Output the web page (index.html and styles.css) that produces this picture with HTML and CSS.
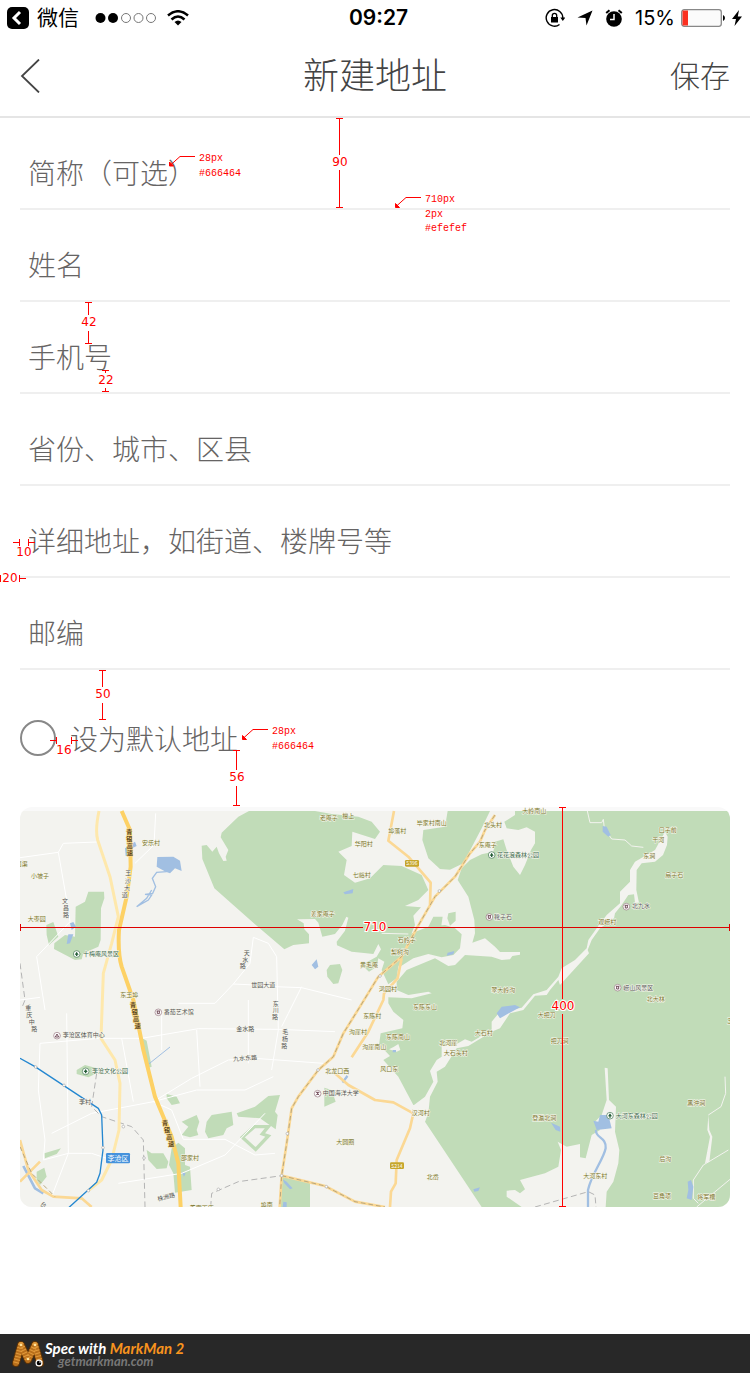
FILE: index.html
```html
<!DOCTYPE html>
<html lang="zh-CN">
<head>
<meta charset="utf-8">
<meta name="viewport" content="width=device-width, initial-scale=1">
<title>新建地址</title>
<link rel="stylesheet" href="styles.css">
</head>
<body>
<div class="page">
  <div class="status">
    <div class="status-left">
      <svg class="app-back" viewBox="0 0 22 22" width="22" height="22" aria-hidden="true"><rect width="22" height="22" rx="5"/><path d="M13 5 7 11l6 6" fill="none" stroke="#fff" stroke-width="3"/></svg>
      <span class="app-name">微信</span>
      <svg class="signal" viewBox="0 0 62 12" width="62" height="12" aria-hidden="true"><circle cx="5.500" cy="6" r="5"/><circle cx="18" cy="6" r="5"/><g fill="none" stroke="#777" stroke-width="1"><circle cx="31" cy="6" r="4.500"/><circle cx="43.500" cy="6" r="4.500"/><circle cx="56" cy="6" r="4.500"/></g></svg>
      <svg class="wifi" viewBox="0 0 22 16" width="22" height="16" aria-hidden="true"><g fill="none" stroke="#000" stroke-width="2.500"><path d="M1 5.500Q11-3 21 5.500"/><path d="M4.500 9.500Q11 3.500 17.500 9.500"/></g><path d="M7.500 12Q11 9 14.500 12L11 15.500Z"/></svg>
    </div>
    <div class="time">09:27</div>
    <div class="status-right">
      <svg viewBox="0 0 20 20" width="20" height="20" aria-hidden="true"><path d="M14.500 16.500A8.300 8.300 0 1 1 17.800 10" fill="none" stroke="#000" stroke-width="1.400"/><path d="M15.300 9.500h5l-2.500 3.500ZM6 9h7v5.500H6Z"/><path d="M7.300 9V7.500a2.200 2.200 0 0 1 4.400 0V9" fill="none" stroke="#000" stroke-width="1.300"/></svg>
      <svg viewBox="0 0 16 16" width="16" height="16" aria-hidden="true"><path d="M15.500 .5 9.500 15.500 8.500 8 .5 7.500Z"/></svg>
      <svg viewBox="0 0 18 18" width="18" height="18" aria-hidden="true"><circle cx="9" cy="10" r="7.800"/><path d="M1.200 4 4.500 1.200M16.800 4 13.500 1.200" stroke="#000" stroke-width="2"/><path d="M9 5v5.500H5" fill="none" stroke="#fff" stroke-width="1.500"/></svg>
      <span class="percent">15%</span>
      <svg class="battery" viewBox="0 0 45 18" width="45" height="18" aria-hidden="true"><rect x=".7" y=".7" width="39.600" height="16.600" rx="2.500" fill="#fbfbfb" stroke="#888" stroke-width="1.300"/><path d="M1.500 1.500h5.500v15h-5.500Z" fill="#fb3020"/><path d="M42 6q2 1 2 3t-2 3Z"/></svg>
      <svg class="bolt" viewBox="0 0 10 16" width="10" height="16" aria-hidden="true"><path d="M7 0 0 9h4L2.500 16 10 6.500H5.800Z"/></svg>
    </div>
  </div>

  <header class="nav">
    <button class="back" type="button" aria-label="返回"><svg viewBox="0 0 20 34" width="20" height="34" aria-hidden="true"><path d="M19 .5 2 17l17 16.500" fill="none" stroke="#444" stroke-width="1.800"/></svg></button>
    <h1 class="title">新建地址</h1>
    <button class="save" type="submit" form="address">保存</button>
  </header>

  <form class="form" id="address">
    <input class="field" type="text" aria-label="简称（可选）" placeholder="简称（可选）">
    <input class="field" type="text" aria-label="姓名" placeholder="姓名">
    <input class="field" type="tel" aria-label="手机号" placeholder="手机号">
    <input class="field" type="text" aria-label="省份、城市、区县" placeholder="省份、城市、区县">
    <input class="field" type="text" aria-label="详细地址，如街道、楼牌号等" placeholder="详细地址，如街道、楼牌号等">
    <input class="field" type="text" aria-label="邮编" placeholder="邮编">
    <label class="default"><input class="tick" type="checkbox"><span>设为默认地址</span></label>
  </form>

  <div class="map">
    <svg class="map-art" viewBox="15 21 2130 1200" role="img" aria-label="地图">
      <rect x="15" y="21" width="2130" height="1200" fill="#f9f9f9"/>
      <rect x="15" y="33" width="2130" height="1188" fill="#f3f3ef"/>
      <!-- woodland -->
      <g fill="#c1dcb8">
        <path d="M702 33 670 50 620 98 617 112 640 150 632 170 635 182 625 183 612 160 605 140 592 155 575 135 560 137 562 177 598 265 720 373 808 448 835 435 882 430 882 403 868 388 866 370 846 358 900 357 910 368 922 410 960 402 982 375 994 350 1000 353 990 392 965 425 966 436 1010 455 1040 458 1075 462 1090 432 1098 448 1085 470 1040 495 1062 515 1085 500 1090 475 1108 485 1100 510 1120 553 1145 535 1150 500 1200 375 1195 347 1218 322 1170 318 1210 300 1240 270 1220 225 1160 198 1105 195 1065 235 1020 248 987 225 995 180 970 155 1010 138 1012 95 1080 117 1095 95 1070 65 1030 50 950 42 900 33Z"/>
        <path d="M1298 33 1290 80 1225 90 1222 120 1240 175 1275 207 1305 209 1345 190 1400 85 1425 33Z"/>
        <path d="M1300 340 1322 335 1322 362 1305 377 1297 355ZM1275 350 1283 350 1278 383 1240 380 1255 350ZM1190 400 1240 380 1290 375 1320 385 1340 403 1335 445 1315 465 1280 472 1240 462 1195 475 1155 500 1145 490 1160 430Z"/>
        <path d="M1328 240 1340 205 1365 180 1400 163 1435 155 1440 125 1465 118 1475 150 1495 200 1515 225 1530 195 1548 150 1560 130 1560 95 1535 82 1510 90 1475 85 1468 65 1500 45 1500 33H2145V1221H1400L1230 965 1236 915 1195 915 1150 830 1105 780 1125 768 1108 750 1115 740 1092 735 1097 700 1162 685 1165 660 1135 635 1120 610 1120 592 1190 595 1250 580 1240 575 1180 585 1145 570 1145 545 1175 510 1260 475 1300 498 1320 495 1350 465 1430 470 1460 480 1485 478 1492 468 1515 464 1515 456 1455 456 1440 440 1410 415 1372 428 1380 400 1378 360 1360 290Z"/>
        <path d="M267 275 220 275 210 305 182 320 180 410 150 405 118 430 117 447 180 480 200 478 205 460 250 440 257 420 258 325 268 295ZM94 375 115 366 125 395 130 410 102 435 95 405ZM935 510 945 495 975 492 982 510 970 550 955 552 937 530Z"/>
        <path d="M382 715 395 722 410 800 398 805ZM185 810 210 795 245 805 245 820 220 832 185 822ZM455 882 485 890 495 910 470 915 455 895ZM88 1060 138 1045 125 1062 90 1075ZM65 1115 88 1103 95 1130 75 1155 65 1140ZM500 965 545 945 553 965 545 990 550 1005 525 1012 500 1005 520 980ZM575 965 590 945 650 935 655 975 635 985 625 1005 580 1015 570 995ZM665 940 720 920 760 888 795 885 780 935 788 945 782 988 735 955 670 950ZM395 1050 410 1060 445 1060 460 1085 455 1105 425 1107 400 1080ZM470 1045 490 1028 510 1045 510 1095 525 1100 530 1170 480 1178 475 1120 462 1095ZM928 863 950 870 962 905 928 920ZM800 1130 885 1148V1221H797Z"/>
        <path d="M682 1012 718 980 760 980 742 1002 760 1008 722 1048Z" fill="none" stroke="#c1dcb8" stroke-width="10"/>
      </g>
      <!-- valleys -->
      <g fill="#f3f3ef">
        <path d="M1950 95 1958 110 1956 135 1944 165 1920 185 1880 190 1865 210 1864 270 1872 308 1860 308 1857 283 1840 285 1820 315 1800 340 1797 355 1755 385 1730 420 1718 450 1722 460 1685 500 1635 555 1630 540 1605 570 1595 585 1560 587 1525 630 1485 640 1455 685 1430 695 1360 738 1325 745 1290 800 1265 815 1268 845 1245 890 1240 940 1230 965 1195 940 1193 918 1230 890 1255 845 1245 813 1265 780 1280 770 1280 735 1320 735 1350 718 1370 725 1430 690 1430 665 1455 635 1520 623 1555 583 1595 570 1630 530 1640 505 1680 480 1715 445 1720 420 1745 385 1775 345 1815 310 1815 275 1845 245 1845 210 1860 185 1920 150Z"/>
        <path d="M1769 803 1778 805 1782 900 1803 920 1800 995 1813 1050 1810 1090 1795 1145 1775 1175 1772 1221H1520L1475 1190 1475 1172 1500 1170 1515 1180 1530 1168 1515 1140 1590 1120 1630 1100 1638 1050 1628 1025 1655 1040 1695 1032 1695 1072 1712 1075 1730 1005 1755 990 1740 965 1760 945 1775 900ZM1137 740 1150 732 1156 750 1145 755 1122 748Z"/>
        <path d="M2080 945 2083 990 2092 1010 2083 1085 2070 1090 2085 1010 2077 990Z"/>
      </g>
      <g fill="none" stroke="#f3f3ef" stroke-width="4">
        <path d="M1717 33 1725 68 1760 68 1765 58 1768 85 1790 117 1830 120 1850 138 1885 142M2140 1050 2065 1095 2035 1140 2035 1195 2050 1210M2145 1138 2045 1221M2080 945 2118 920 2132 880 2130 830M1100 400 1180 402" stroke-width="3"/>
      </g>
      <!-- water -->
      <g fill="#a1bfe2">
        <path d="M427 171 475 170 495 182 500 213 480 205 465 220 452 215 425 200ZM330 145 345 135 360 125 365 138 340 150 342 168 332 168ZM165 370 175 366 183 380 170 390ZM160 403 175 403 165 430 155 432ZM985 277 1015 267 1013 280 990 283ZM890 495 905 478 910 500 900 508ZM1298 458 1318 453 1315 463 1295 467ZM1445 640 1460 620 1500 615 1515 622 1490 635 1455 655ZM1763 78 1775 80 1787 105 1780 110 1763 95ZM1755 945 1780 945 1790 985 1745 990 1735 962 1750 965ZM1608 968 1635 980 1636 995 1622 990ZM2018 1145 2028 1140 2035 1160 2030 1200 2015 1195 2020 1170ZM980 845 995 825 1000 830 985 850ZM1133 750 1143 750 1143 757 1133 757ZM1375 1168 1395 1162 1390 1173 1378 1175ZM803 1138 815 1145 833 1165 825 1168 808 1150ZM805 1205 815 1207 815 1221 803 1221ZM500 1115 512 1120 507 1130Z"/>
        <path d="M455 215 425 217 412 235 422 260 413 280 390 283 410 285 400 300 365 320 395 295 410 270" stroke="#a1bfe2" stroke-width="4" fill="none"/>
        <path d="M400 793 465 741" stroke="#a1bfe2" stroke-width="3"/>
        <path d="M1743 990C1740 1015 1775 1010 1772 1045C1765 1080 1730 1120 1719 1170V1221" fill="none" stroke="#a1bfe2" stroke-width="7"/>
        <path d="M25 1098 60 1165 85 1180" fill="none" stroke="#a1bfe2" stroke-width="8"/>
      </g>
      <!-- streets -->
      <g fill="none" stroke="#fff" stroke-width="3">
        <path d="M422 40 417 135 360 190M15 173 130 157 145 130 245 126M130 157 155 300 165 365 65 470 90 630M15 600 75 592M75 730 250 715 380 715 550 686 790 688 960 695M75 730 70 870 90 1020 85 1080 160 1060 230 1060 290 1080M155 640 160 1060 110 1190M110 1000 230 940 415 905 530 835 640 780 720 775 925 790M415 905 545 870 690 870 775 830M415 905 470 930 505 1018 630 1018 720 1065 780 1060M440 640V750M490 610 600 610 655 552 720 555 780 560 860 563 1010 600M655 552 705 490 715 412 760 430 785 470 790 690 770 810M800 680 820 640 860 560M545 690 555 860M320 715 355 905M310 1150 500 1120 630 1065 750 940M700 600V790"/>
      </g>
      <!-- railways -->
      <g fill="none" stroke="#b4b4b4" stroke-width="3" stroke-dasharray="18 10">
        <path d="M15 490 30 600 20 625M245 820 230 920 260 950 350 980 385 1020 390 1221M587 1221 590 1180 670 1145 800 1127M1560 1221 1720 1175 1740 1185 1743 1221"/>
      </g>
      <!-- main roads -->
      <g fill="none" stroke-linejoin="round">
        <path d="M252 33Q240 90 248 120L285 230 310 350 290 430 265 520 258 715 300 780 315 850 312 990 290 1080 260 1140 220 1172" stroke="#fee8ac" stroke-width="9"/>
        <path d="M320 33 345 90 347 200 335 290 312 390Q308 460 320 500L355 600 385 750 420 890 470 1010 490 1090 497 1221" stroke="#fdd165" stroke-width="12"/>
        <g stroke="#fbd894" stroke-width="8"><path d="M1137 33 1120 122 1180 170 1247 248 1245 315M1160 475 1148 535 1107 580 1105 600 1060 695 1010 772M958 818 1000 855 1080 900 1135 907 1195 940 1185 985 1145 1080 1142 1150 1128 1175 1125 1221M800 1127 930 1158 1020 1205 1110 1221M15 1020 40 1110 80 1170 115 1190 200 1195 230 1221M15 1145 75 1085M1440 45 1410 90 1395 125 1365 160 1320 230 1260 290 1205 385 1160 470 1090 530 1035 620 985 700 955 770 910 810 850 890 830 925 815 1030 800 1127 794 1221"/></g>
        <path d="M1440 45 1410 90 1395 125 1365 160 1320 230 1260 290 1205 385 1160 470 1090 530 1035 620 985 700 955 770 910 810 850 890 830 925 815 1030 800 1127 794 1221M800 1127 930 1158 1020 1205 1110 1221M15 1040 50 1120 120 1190" stroke="#b9a77e" stroke-width="3" stroke-dasharray="14 9"/>
        <path d="M15 775 60 800 250 925 260 945 264 1050 255 1120 245 1147 160 1224" stroke="#2487d0" stroke-width="4"/>
      </g>
      <g fill="#fff" stroke="#aaa" stroke-width="2"><circle cx="62" cy="801" r="4"/><circle cx="147" cy="856" r="4"/><circle cx="264" cy="1043" r="4"/><circle cx="220" cy="1172" r="4"/><circle cx="325" cy="980" r="4"/><circle cx="387" cy="1074" r="4"/><circle cx="610" cy="1168" r="4"/><circle cx="909" cy="810" r="4"/><circle cx="817" cy="1001" r="4"/><circle cx="800" cy="1127" r="4"/><circle cx="934" cy="1160" r="4"/><circle cx="1095" cy="528" r="4"/><circle cx="1273" cy="273" r="4"/></g>
      <!-- shields -->
      <rect x="1170" y="180" width="42" height="20" rx="4" fill="#c6a62b"/><rect x="1125" y="1087" width="42" height="20" rx="4" fill="#c6a62b"/><rect x="273" y="1059" width="72" height="31" rx="4" fill="#4592dc"/>
      <g class="shield"><text x="1191" y="196">S396</text><text x="1146" y="1103">S214</text><text class="district" x="309" y="1082">李沧区</text></g>
      <g class="village">
        <text x="408" y="136">安乐村</text><text x="20" y="199">南渠</text><text x="75" y="234">小坡子</text><text x="65" y="364">大枣园</text><text x="343" y="590">东王埠</text><text x="525" y="1079">邵家村</text>
        <text x="941" y="61">老庵子</text><text x="1000" y="55">檀上</text><text x="1147" y="100">埠落村</text><text x="1250" y="74">毕家村南山</text><text x="1046" y="138">华阳村</text><text x="1040" y="231">七峪村</text><text x="923" y="348">姜家庵子</text><text x="1175" y="426">石岭子</text><text x="1155" y="461">梨树沟</text><text x="1062" y="500">黄毛庵</text><text x="1119" y="573">鸿园村</text><text x="1230" y="626">东陈东山</text><text x="1434" y="82">北头村</text><text x="1418" y="140">东庵子</text><text x="1558" y="38">大岭南山</text>
        <text x="1958" y="96">口子前</text><text x="1930" y="125">干河</text><text x="1903" y="174">东涧</text><text x="1978" y="230">扇子石</text><text x="1777" y="371">观崂村</text><text x="1465" y="575">翠大岭沟</text><text x="1922" y="602">北大林</text>
        <text x="1072" y="655">东陈村</text><text x="1029" y="701">沟崖村</text><text x="1078" y="748">沟崖南山</text><text x="1149" y="716">东陈南山</text><text x="1123" y="812">风口东</text><text x="967" y="818">北龙口西</text><text x="991" y="1032">大圆圈</text><text x="1253" y="1136">北岙</text><text x="1217" y="946">汉河村</text><text x="1300" y="736">北河崖</text><text x="1322" y="766">大石头村</text><text x="1406" y="706">大石村</text><text x="755" y="1220">埠南</text><text x="560" y="1229">董家下庄</text>
        <text x="1595" y="652">大把刀</text><text x="1634" y="729">把刀涧</text><text x="1588" y="959">登瀛北涧</text><text x="1741" y="1135">大河东村</text><text x="1951" y="1082">后沟</text><text x="1941" y="1194">豆角项</text><text x="2074" y="1196">将军槽</text><text x="2044" y="916">黑沖涧</text><text x="2146" y="670">玉</text>
      </g>
      <g class="street">
        <text x="745" y="561">世园大道</text><text x="691" y="693">金水路</text><text x="691" y="781" transform="rotate(-4 691 781)">九水东路</text><text x="455" y="1197" transform="rotate(-14 455 1197)">株洲路</text><text x="210" y="912">李村</text><text x="82" y="1220" transform="rotate(30 82 1220)">台</text>
        <text class="strong" x="343 343 344 345" y="102 123 144 166">青银高速</text>
        <text x="340 338 336 329" y="226 248 269 292">王沙大道</text><text x="150 153 153" y="309 329 350">文昌路</text><text x="695 691 683" y="465 485 505">天水路</text><text x="40 43 50 58" y="631 651 672 692">重庆中路</text>
        <text class="strong" x="354 359 363 368" y="622 643 663 684">青银高速</text><text class="strong" x="450 456 463 469" y="976 996 1017 1037">青银高速</text><text x="782 782 780" y="617 637 658">东川路</text><text x="811 810 808" y="703 723 743">毛杨路</text>
      </g>
      <g class="poi">
        <text x="204" y="468">十梅庵风景区</text><text x="1446" y="171">花花浪森林公园</text><text x="231" y="820">李沧文化公园</text><text x="1802" y="953">大河东森林公园</text>
      </g>
      <g class="poi place">
        <text x="1437" y="356">靴子石</text><text x="1851" y="325">北九水</text><text x="1825" y="569">崂山风景区</text><text x="446" y="643">番茄艺术馆</text><text x="143" y="712">李沧区体育中心</text><text x="923" y="886">中国海洋大学</text>
      </g>
      <g fill="#fff" stroke="#3f7450" stroke-width="2"><circle cx="185" cy="462" r="10"/><circle cx="1430" cy="165" r="10"/><circle cx="212" cy="814" r="10"/><circle cx="1785" cy="947" r="10"/></g>
      <path d="M185 455l6 9h-4v4h-4v-4h-4ZM1430 158l6 9h-4v4h-4v-4h-4ZM212 807l6 9h-4v4h-4v-4h-4ZM1785 940l6 9h-4v4h-4v-4h-4Z" fill="#255e38"/>
      <g fill="#fff" stroke="#94737d" stroke-width="2"><circle cx="1423" cy="351" r="10"/><circle cx="1834" cy="320" r="10"/><circle cx="1808" cy="563" r="10"/><circle cx="430" cy="637" r="10"/><circle cx="126" cy="707" r="10"/><circle cx="908" cy="881" r="10"/></g>
      <path d="M1418 347h10M1420 347v8h6v-8M1829 316h10M1831 316v8h6v-8M1803 559h10M1805 559v8h6v-8M425 633h10M427 633v8h6v-8M121 711l5-9 5 9ZM903 877h10M908 876v9M903 886l5-5 5 5" fill="none" stroke="#75505d" stroke-width="3"/>
    </svg>
  </div>

  <footer class="credit">
    <svg class="logo" viewBox="0 0 34 30" width="34" height="30" aria-hidden="true"><g fill="none" stroke-linecap="round" stroke-linejoin="round"><path d="M5 24 10 6l7 15L24 6l5 18" stroke="#5c3308" stroke-width="8"/><path d="M5 24 10 6l7 15L24 6l5 18" stroke="#b96f1b" stroke-width="6"/><path d="M5 24 10 6l7 15L24 6l5 18" stroke="#e19a3b" stroke-width="6" stroke-dasharray="1 2" stroke-linecap="butt"/></g><g fill="#ffe29c"><circle cx="10" cy="6" r="1.300"/><circle cx="24" cy="6" r="1.300"/><circle cx="17" cy="20" r="1.300"/></g><circle cx="28" cy="24" r="3.500" fill="#fff"/><circle cx="28" cy="24" r="2.300" fill="#000"/><circle cx="29" cy="23" r=".8" fill="#fff"/></svg>
    <div class="credit-text"><div>Spec with <span class="brand">MarkMan 2</span></div><a class="site" href="#">getmarkman.com</a></div>
  </footer>

  <!-- measurement layer -->
  <svg class="specs" viewBox="0 0 750 1210" width="750" height="1210" aria-hidden="true">
    <g fill="none" stroke="#f00" stroke-width="1" shape-rendering="crispEdges">
      <path d="M336 118.500h7M339.500 118v37M339.500 170v38M336 207.500h7"/>
      <path d="M85 302.500h7M88.500 302v13M88.500 331v12M85 343.500h7"/>
      <path d="M102 370.500h7M105.500 370v3M105.500 388v4M102 391.500h7"/>
      <path d="M13 542.500h6M19.500 539v7M28.500 539v7M29 542.500h6"/>
      <path d="M.5 575v7M19.500 575v7M20 578.500h6"/>
      <path d="M99 670.500h7M102.500 670v17M102.500 703v16M99 719.500h7"/>
      <path d="M50 740.500h6M56.500 737v7M71.500 737v7M72 740.500h6"/>
      <path d="M233 750.500h7M236.500 750v20M236.500 786v19M233 805.500h7"/>
      <path d="M20.500 924v7M21 927.500h342M388 927.500h341M729.500 924v7" stroke="#d00"/>
      <path d="M559 807.500h7M562.500 807v192M562.500 1014v193M559 1206.500h7"/>
      <path d="M195 156.500h-15M421 197.500h-15M268 729.500h-15"/>
    </g>
    <g stroke="#f00" fill="#f00"><path d="m180 156.500-10 9M406 197.500l-10 9M253 729.500l-10 9"/><path d="M169.500 162v4h4ZM395.500 203.500v4h4ZM242.500 735.500v4h4Z"/></g>
    <g class="measure"><text x="340" y="166">90</text><text x="89" y="326">42</text><text x="106" y="384">22</text><text x="24" y="556">10</text><text x="10" y="582">20</text><text x="103" y="698">50</text><text x="64" y="754">16</text><text x="237" y="781">56</text><text x="375" y="931">710</text><text x="563" y="1010">400</text></g>
    <g class="note"><text x="199" y="161">28px</text><text x="199" y="176">#666464</text><text x="425" y="202">710px</text><text x="425" y="217">2px</text><text x="425" y="231">#efefef</text><text x="272" y="734">28px</text><text x="272" y="749">#666464</text></g>
  </svg>
</div>
</body>
</html>
```

FILE: styles.css
```css
* { box-sizing: border-box; }
body { margin: 0; background: #fff; font-family: "Noto Sans CJK SC", sans-serif; font-weight: 300; color: #444; }
button, input { font: inherit; color: inherit; background: none; border: 0; padding: 0; margin: 0; border-radius: 0; }
svg { display: block; flex: none; }

.page { position: relative; min-height: 100vh; display: flex; flex-direction: column; }

.status { display: grid; grid-template-columns: 1fr auto 1fr; align-items: center; height: 36px; padding: 0 8px 0 7px; color: #000; }
.status-left, .status-right { display: flex; align-items: center; }
.status-right { justify-content: flex-end; gap: 12px; }
.app-name { font-size: 21px; line-height: 32px; font-weight: 400; margin-left: 8px; padding-bottom: 4px; }
.signal { margin-left: 16px; }
.wifi { margin-left: 10px; }
.time { padding-left: 8px; font: 600 21px/36px Inter, sans-serif; }
.percent { font: 400 20px/36px Inter, sans-serif; }
.battery { margin-left: -6px; }
.bolt { margin-left: -6px; }

.nav { display: grid; grid-template-columns: 1fr auto 1fr; align-items: center; height: 82px; padding: 0 20px 4px; border-bottom: 2px solid #e5e5e5; }
.back { justify-self: start; padding-top: 4px; }
.title { margin: 0; padding-bottom: 2px; font-size: 36px; line-height: 52px; font-weight: 300; }
.save { justify-self: end; font-size: 30px; line-height: 44px; }

.form { display: flex; flex-direction: column; padding: 0 20px; color: #666464; font-size: 28px; }
.field { width: 100%; height: 92px; padding: 18px 8px 0; border-bottom: 2px solid #efefef; outline: 0; }
.field::placeholder { color: #666464; opacity: 1; }
.default { display: flex; align-items: center; gap: 14px; margin: 50px 0; line-height: 36px; }
.tick { appearance: none; width: 36px; height: 36px; border: 2px solid #888; border-radius: 50%; }

.map { margin: 1px 20px 0; border-radius: 12px; overflow: hidden; }
.map-art { width: 100%; height: auto; }
.map-art text { font-size: 18px; font-weight: 400; stroke: #f8f8ee; stroke-width: 3px; paint-order: stroke; }
.village { fill: #78742a; text-anchor: middle; }
.street { fill: #555; text-anchor: middle; }
.map-art .strong { fill: #5a461e; stroke: #fdd98a; font-weight: 700; }
.shield { text-anchor: middle; }
.map-art .shield text { fill: #fff; stroke: none; font-size: 15px; }
.map-art .shield .district { font-size: 21px; }
.poi { fill: #3c6a50; }
.place { fill: #555; }

.credit { display: flex; align-items: center; height: 39px; margin-top: auto; padding-left: 11px; background: #282828; color: #fff; font: italic 700 15px/14px Lato, sans-serif; }
.credit-text { display: flex; flex-direction: column; }
.brand { color: #f7931e; }
.site { color: #777; font-size: 13px; line-height: 12px; text-decoration: none; padding-left: 13px; }

.specs { position: absolute; top: 0; left: 0; pointer-events: none; }
.measure { font: 12px "DejaVu Sans", sans-serif; fill: #f00; text-anchor: middle; stroke: #fff; stroke-width: 2px; paint-order: stroke; }
.note { font: 10px "Liberation Mono", monospace; fill: #f00; }
```
